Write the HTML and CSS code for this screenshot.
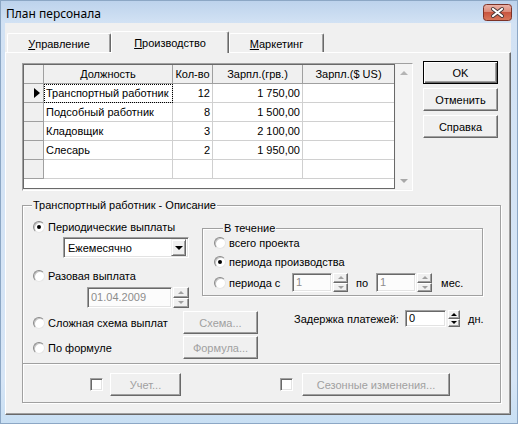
FILE: index.html
```html
<!DOCTYPE html>
<html lang="ru">
<head>
<meta charset="utf-8">
<title>План персонала</title>
<link rel="stylesheet" href="styles.css">
</head>
<body>
<div class="window">
  <div class="titlebar">
    <div class="title">План персонала</div>
    <div class="close" aria-label="Закрыть">
      <svg width="29" height="17" viewBox="0 0 29 17">
        <defs>
          <linearGradient id="cg" x1="0" y1="0" x2="0" y2="1">
            <stop offset="0" stop-color="#ecb5aa"/>
            <stop offset="0.45" stop-color="#dc8b7a"/>
            <stop offset="0.5" stop-color="#c9553f"/>
            <stop offset="1" stop-color="#d9785c"/>
          </linearGradient>
        </defs>
        <rect x="0.5" y="0.5" width="28" height="16" rx="3" fill="url(#cg)" stroke="#7c3227"/>
        <path d="M10 5 L19 12 M19 5 L10 12" stroke="#463636" stroke-width="4" stroke-linecap="round"/>
        <path d="M10 5 L19 12 M19 5 L10 12" stroke="#ffffff" stroke-width="2.2" stroke-linecap="round"/>
      </svg>
    </div>
  </div>

  <div class="client">
    <div class="tabs">
      <div class="tab t1"><u>У</u>правление</div>
      <div class="tab t2 active"><u>П</u>роизводство</div>
      <div class="tab t3"><u>М</u>аркетинг</div>
    </div>

    <div class="panel">
      <div class="toprow">
        <div class="gridwrap">
          <div class="grid">
            <div class="row head">
              <div class="c ind"></div>
              <div class="c">Должность</div>
              <div class="c">Кол-во</div>
              <div class="c">Зарпл.(грв.)</div>
              <div class="c last">Зарпл.($ US)</div>
            </div>
            <div class="row">
              <div class="c ind"><span class="cur"></span></div>
              <div class="c txt focus">Транспортный работник</div>
              <div class="c num">12</div>
              <div class="c num">1&nbsp;750,00</div>
              <div class="c last"></div>
            </div>
            <div class="row">
              <div class="c ind"></div>
              <div class="c txt">Подсобный работник</div>
              <div class="c num">8</div>
              <div class="c num">1&nbsp;500,00</div>
              <div class="c last"></div>
            </div>
            <div class="row">
              <div class="c ind"></div>
              <div class="c txt">Кладовщик</div>
              <div class="c num">3</div>
              <div class="c num">2&nbsp;100,00</div>
              <div class="c last"></div>
            </div>
            <div class="row">
              <div class="c ind"></div>
              <div class="c txt">Слесарь</div>
              <div class="c num">2</div>
              <div class="c num">1&nbsp;950,00</div>
              <div class="c last"></div>
            </div>
            <div class="row">
              <div class="c ind"></div>
              <div class="c txt"></div>
              <div class="c num"></div>
              <div class="c num"></div>
              <div class="c last"></div>
            </div>
          </div>
          <div class="vscroll">
            <span class="sarrow up"></span>
            <span class="sarrow down"></span>
          </div>
        </div>
        <div class="btncol">
          <div class="btn default">OK</div>
          <div class="btn">Отменить</div>
          <div class="btn">Справка</div>
        </div>
      </div>

      <div class="group main">
        <div class="legend">Транспортный работник - Описание</div>
        <div class="g-top">
          <div class="paycol">
            <div class="opt"><span class="radio checked"></span>Периодические выплаты</div>
            <div class="combo"><span class="combo-text">Ежемесячно</span><span class="combo-btn"></span></div>
            <div class="opt opt2"><span class="radio"></span>Разовая выплата</div>
            <div class="datefield">
              <span class="field dis date">01.04.2009</span>
              <span class="spin dis tall"><span class="sb up"></span><span class="sb dn"></span></span>
            </div>
          </div>
          <div class="group period">
            <div class="legend">В течение</div>
            <div class="opt p1"><span class="radio"></span>всего проекта</div>
            <div class="opt p2"><span class="radio checked"></span>периода производства</div>
            <div class="opt p3">
              <span class="radio"></span><span class="lbl-from">периода с</span>
              <span class="field dis small">1</span>
              <span class="spin dis"><span class="sb up"></span><span class="sb dn"></span></span>
              <span class="lbl-to">по</span>
              <span class="field dis small">1</span>
              <span class="spin dis"><span class="sb up"></span><span class="sb dn"></span></span>
              <span class="lbl-mes">мес.</span>
            </div>
          </div>
        </div>

        <div class="g-row r-scheme">
          <div class="opt wide"><span class="radio"></span>Сложная схема выплат</div>
          <div class="btn dis">Схема...</div>
          <div class="delay">
            <span class="delay-lbl">Задержка платежей:</span>
            <span class="field en">0</span>
            <span class="spin en"><span class="sb up"></span><span class="sb dn"></span></span>
            <span class="lbl-dn">дн.</span>
          </div>
        </div>

        <div class="g-row r-formula">
          <div class="opt wide"><span class="radio"></span>По формуле</div>
          <div class="btn dis">Формула...</div>
        </div>

        <div class="g-bottom">
          <span class="check"></span>
          <div class="btn dis b-uchet">Учет...</div>
          <span class="check c2"></span>
          <div class="btn dis b-season">Сезонные изменения...</div>
        </div>
      </div>
    </div>
  </div>
</div>
</body>
</html>
```

FILE: styles.css
```css
* { box-sizing: border-box; }
html, body { margin: 0; padding: 0; }
body {
  width: 518px;
  height: 424px;
  overflow: hidden;
  font-family: "Liberation Sans", Arial, sans-serif;
  font-size: 11px;
  color: #000;
}

.window {
  width: 518px;
  height: 424px;
  display: flex;
  flex-direction: column;
  background: linear-gradient(#bcd2ec 0, #d2e2f4 23px, #d6e5f6 380px, #c8dff3 424px);
  box-shadow: inset 0 0 0 1px #8ca7c5;
}

.titlebar {
  height: 23px;
  display: flex;
  align-items: flex-start;
  padding: 0 6px;
}
.title {
  flex: 1;
  margin-top: 5px;
  font-family: "Noto Sans", "Liberation Sans", sans-serif;
  font-size: 12px;
  line-height: 17px;
}
.close {
  margin-top: 4px;
  width: 29px;
  height: 17px;
}
.close svg { display: block; }

.client {
  margin-left: 5px;
  width: 506px;
  height: 392px;
  background: #f0f0f0;
  display: flex;
  flex-direction: column;
}

/* Tabs */
.tabs {
  height: 29px;
  display: flex;
  align-items: flex-end;
  padding-left: 2px;
}
.tab {
  height: 19px;
  display: flex;
  align-items: center;
  justify-content: center;
  background: #f0f0f0;
  border-top: 1px solid #fff;
  border-left: 1px solid #fff;
  border-right: 1px solid #696969;
  box-shadow: inset -1px 0 0 #a0a0a0;
  border-radius: 2px 2px 0 0;
  padding-top: 1px;
}
.t1 { width: 104px; }
.t2 { width: 118px; }
.t3 { width: 95px; }
.tab.active {
  height: 22px;
  margin-bottom: -1px;
  padding-bottom: 1px;
  position: relative;
  z-index: 2;
}

.panel {
  height: 363px;
  background: #f0f0f0;
  border-top: 1px solid #fff;
  border-left: 1px solid #fff;
  border-right: 1px solid #696969;
  border-bottom: 1px solid #696969;
  box-shadow: inset -1px -1px 0 #a0a0a0;
  padding: 8px 0 0 16px;
}

.toprow {
  display: flex;
  align-items: flex-start;
  height: 130px;
}

/* Grid */
.gridwrap {
  margin-top: 2px;
  width: 391px;
  height: 128px;
  display: flex;
  align-items: flex-start;
  border: 1px solid;
  border-color: #a0a0a0 #fff #fff #a0a0a0;
}
.grid {
  width: 372px;
  height: 125px;
  background: #fff;
  border: 1px solid #696969;
}
.row {
  display: grid;
  grid-template-columns: 20px 129px 40px 90px 91px;
  height: 19px;
}
.c {
  border-right: 1px solid #d0d0d0;
  border-bottom: 1px solid #d0d0d0;
  display: flex;
  align-items: center;
  white-space: nowrap;
  overflow: hidden;
  line-height: 13px;
}
.c.last { border-right: 0; }
.head .c {
  background: #f0f0f0;
  justify-content: center;
  border-color: #a0a0a0;
}
.c.ind {
  background: #f0f0f0;
  border-color: #a0a0a0;
  padding-left: 10px;
}
.c.txt { padding-left: 2px; }
.c.num { justify-content: flex-end; padding-right: 2px; }
.c.focus { outline: 1px dotted #000; outline-offset: -1px; }
.cur {
  width: 0;
  height: 0;
  border-left: 6px solid #000;
  border-top: 5px solid transparent;
  border-bottom: 5px solid transparent;
}

.vscroll {
  margin-left: 1px;
  width: 16px;
  height: 125px;
  background: #f3f3f3;
  display: flex;
  flex-direction: column;
  justify-content: space-between;
  align-items: center;
  padding: 7px 0 6px;
}
.sarrow {
  width: 0;
  height: 0;
  border-left: 4px solid transparent;
  border-right: 4px solid transparent;
}
.sarrow.up { border-bottom: 4px solid #b4b4b4; }
.sarrow.down { border-top: 4px solid #a8a8a8; }

/* Buttons */
.btncol {
  margin-left: 10px;
  display: flex;
  flex-direction: column;
  gap: 4px;
}
.btn {
  width: 75px;
  height: 23px;
  display: flex;
  align-items: center;
  justify-content: center;
  background: #f0f0f0;
  border: 1px solid;
  border-color: #fff #696969 #696969 #fff;
  box-shadow: inset -1px -1px 0 #a0a0a0;
  white-space: nowrap;
}
.btn.default {
  border-color: #000;
  box-shadow: inset 1px 1px 0 #fff, inset -1px -1px 0 #696969, inset -2px -2px 0 #a0a0a0;
}
.btn.dis { color: #a0a0a0; }

/* Group boxes */
.group {
  border: 1px solid #a0a0a0;
  box-shadow: inset 1px 1px 0 #fff, 1px 1px 0 #fff;
}
.group.main {
  margin-top: 14px;
  width: 479px;
  height: 198px;
}
.legend {
  margin: -7px 0 0 9px;
  padding: 0 1px;
  height: 13px;
  line-height: 13px;
  width: fit-content;
  background: #f0f0f0;
  white-space: nowrap;
}

.g-top {
  margin-top: 8px;
  display: flex;
  align-items: flex-start;
  height: 88px;
}
.paycol {
  width: 167px;
  flex: none;
  padding-left: 10px;
}
.opt {
  display: flex;
  align-items: center;
  height: 14px;
  white-space: nowrap;
}
.radio {
  width: 12px;
  height: 12px;
  margin-right: 3px;
  border-radius: 50%;
  background: #fff;
  border: 1px solid;
  border-color: #8a8a8a #e6e6e6 #e6e6e6 #8a8a8a;
  box-shadow: inset 1px 1px 0 #c4c4c4;
  display: flex;
  align-items: center;
  justify-content: center;
  flex: none;
}
.radio.checked::after {
  content: "";
  width: 4px;
  height: 4px;
  border-radius: 50%;
  background: #000;
}

.combo {
  margin: 3px 0 0 30px;
  width: 126px;
  height: 21px;
  background: #fff;
  border: 1px solid;
  border-color: #a0a0a0 #fff #fff #a0a0a0;
  box-shadow: inset 1px 1px 0 #696969, inset -1px -1px 0 #e3e3e3;
  display: flex;
  align-items: center;
  padding: 2px 2px 2px 4px;
}
.combo-text { flex: 1; }
.combo-btn {
  width: 15px;
  height: 17px;
  background: #f0f0f0;
  border: 1px solid;
  border-color: #f0f0f0 #696969 #696969 #f0f0f0;
  box-shadow: inset 1px 1px 0 #fff, inset -1px -1px 0 #a0a0a0;
  display: flex;
  align-items: center;
  justify-content: center;
}
.combo-btn::after {
  content: "";
  border-left: 4px solid transparent;
  border-right: 4px solid transparent;
  border-top: 4px solid #000;
  margin-top: 1px;
}
.opt2 { margin-top: 11px; }
.datefield {
  margin: 4px 0 0 54px;
  display: flex;
  gap: 1px;
}

.field {
  height: 19px;
  background: #fff;
  border: 1px solid;
  border-color: #a0a0a0 #fff #fff #a0a0a0;
  box-shadow: inset 1px 1px 0 #696969, inset -1px -1px 0 #e3e3e3;
  display: flex;
  align-items: center;
  padding-left: 3px;
  line-height: 13px;
}
.field.dis { color: #8c8c8c; background: #fcfcfc; }
.field.date { width: 85px; height: 21px; }
.field.small { width: 40px; }
.field.en { width: 41px; height: 17px; }

.spin {
  width: 15px;
  height: 19px;
  display: flex;
  flex-direction: column;
}
.spin.tall { width: 16px; height: 21px; }
.spin.en { width: 12px; height: 17px; margin-left: 2px; }
.sb {
  flex: 1;
  background: #f0f0f0;
  border: 1px solid;
  border-color: #fff #696969 #696969 #fff;
  box-shadow: inset -1px -1px 0 #a0a0a0;
  display: flex;
  align-items: center;
  justify-content: center;
}
.sb::after {
  content: "";
  border-left: 3px solid transparent;
  border-right: 3px solid transparent;
}
.sb.up::after { border-bottom: 3px solid #a0a0a0; }
.sb.dn::after { border-top: 3px solid #a0a0a0; }
.spin.en .sb.up::after { border-bottom-color: #000; }
.spin.en .sb.dn::after { border-top-color: #000; }

.group.period {
  margin-top: 8px;
  margin-left: 12px;
  width: 281px;
  height: 68px;
  padding-left: 11px;
}
.p1 { margin-top: 1px; }
.p2 { margin-top: 5px; }
.p3 { margin-top: 4px; height: 19px; }
.lbl-from { width: 63px; }
.p3 .spin { margin-left: 1px; }
.lbl-to { margin: 0 8px 0 8px; }
.lbl-mes { margin-left: 9px; }

.g-row {
  display: flex;
  align-items: center;
  padding-left: 10px;
  height: 23px;
}
.r-scheme { margin-top: 3px; }
.r-formula { margin-top: 2px; }
.opt.wide { width: 150px; }
.delay {
  margin-left: 36px;
  align-self: flex-start;
  margin-top: -1px;
  display: flex;
  align-items: center;
  height: 17px;
}
.delay-lbl { width: 111px; }
.lbl-dn { margin-left: 8px; }

.g-bottom {
  margin-top: 4px;
  border-top: 1px solid #a0a0a0;
  box-shadow: inset 0 1px 0 #fff;
  height: 39px;
  display: flex;
  align-items: center;
  padding: 9px 0 6px 67px;
}
.check {
  width: 13px;
  height: 13px;
  background: #fff;
  border: 1px solid;
  border-color: #a0a0a0 #fff #fff #a0a0a0;
  box-shadow: inset 1px 1px 0 #696969, inset -1px -1px 0 #e3e3e3;
  flex: none;
}
.b-uchet { width: 71px; margin-left: 7px; }
.check.c2 { margin-left: 99px; }
.b-season { width: 148px; margin-left: 9px; }
```
